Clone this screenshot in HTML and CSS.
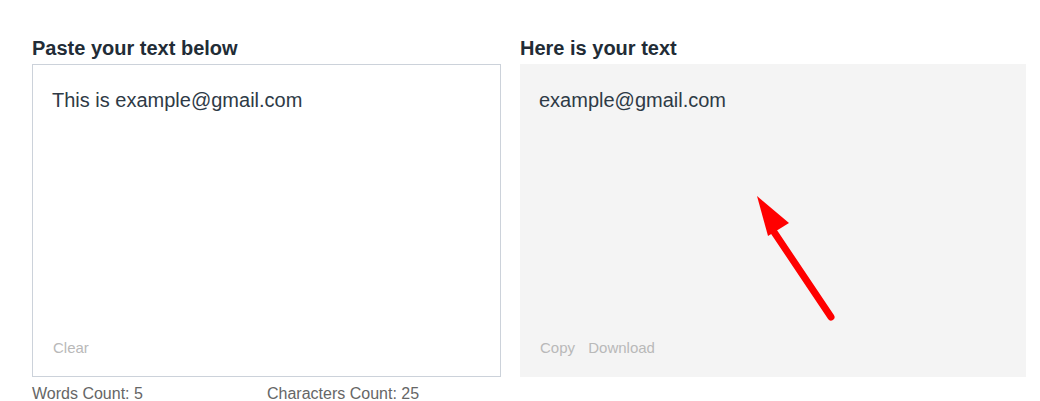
FILE: index.html
```html
<!DOCTYPE html>
<html lang="en">
<head>
    <meta charset="UTF-8">
    <meta name="viewport" content="width=device-width, initial-scale=1.0">
    <title>Email Extractor</title>
    <link rel="stylesheet" href="styles.css">
</head>
<body>

    <div class="tool">
        <div class="column input-col">
            <h2>Paste your text below</h2>
            <div class="box input-box">
                <div class="box-text">This is example@gmail.com</div>
                <div class="actions">
                    <span>Clear</span>
                </div>
            </div>
            <div class="counts">
                <span class="count-words">Words Count: 5</span>
                <span>Characters Count: 25</span>
            </div>
        </div>

        <div class="column output-col">
            <h2>Here is your text</h2>
            <div class="box output-box">
                <div class="box-text">example@gmail.com</div>
                <div class="actions">
                    <span>Copy</span>
                    <span>Download</span>
                </div>
                <svg class="arrow" width="100" height="140" viewBox="0 0 100 140">
                    <line x1="81" y1="123" x2="20" y2="32" stroke="#ff0000" stroke-width="7" stroke-linecap="round"/>
                    <polygon points="7,2 18,42 39,29" fill="#ff0000"/>
                </svg>
            </div>
        </div>
    </div>

</body>
</html>
```

FILE: styles.css
```css
body {
    margin: 0;
    font-family: Arial, "Liberation Sans", sans-serif;
    background-color: #ffffff;
    color: #2d3844;
}

.tool {
    display: flex;
    gap: 19px;
    padding: 37px 0 0 32px;
}

.input-col {
    width: 469px;
}

.output-col {
    width: 506px;
}

h2 {
    margin: 0 0 4px 0;
    font-size: 20px;
    line-height: 23px;
    font-weight: bold;
    color: #222c36;
}

.box {
    height: 313px;
    box-sizing: border-box;
    display: flex;
    flex-direction: column;
    justify-content: space-between;
    position: relative;
}

.input-box {
    border: 1px solid #ccd2da;
    padding: 24px 19px 19px 19px;
}

.output-box {
    background-color: #f4f4f4;
    padding: 25px 19px 20px 19px;
}

.box-text {
    font-size: 20px;
    line-height: 22px;
    color: #2e3a46;
}

.actions {
    font-size: 15px;
    line-height: 18px;
    color: #b9b9b9;
    padding-left: 1px;
}

.actions span {
    margin-right: 9px;
}

.counts {
    display: flex;
    margin-top: 8px;
    font-size: 16px;
    line-height: 18px;
    color: #666666;
}

.count-words {
    width: 235px;
}

.arrow {
    position: absolute;
    left: 230px;
    top: 130px;
}
```
